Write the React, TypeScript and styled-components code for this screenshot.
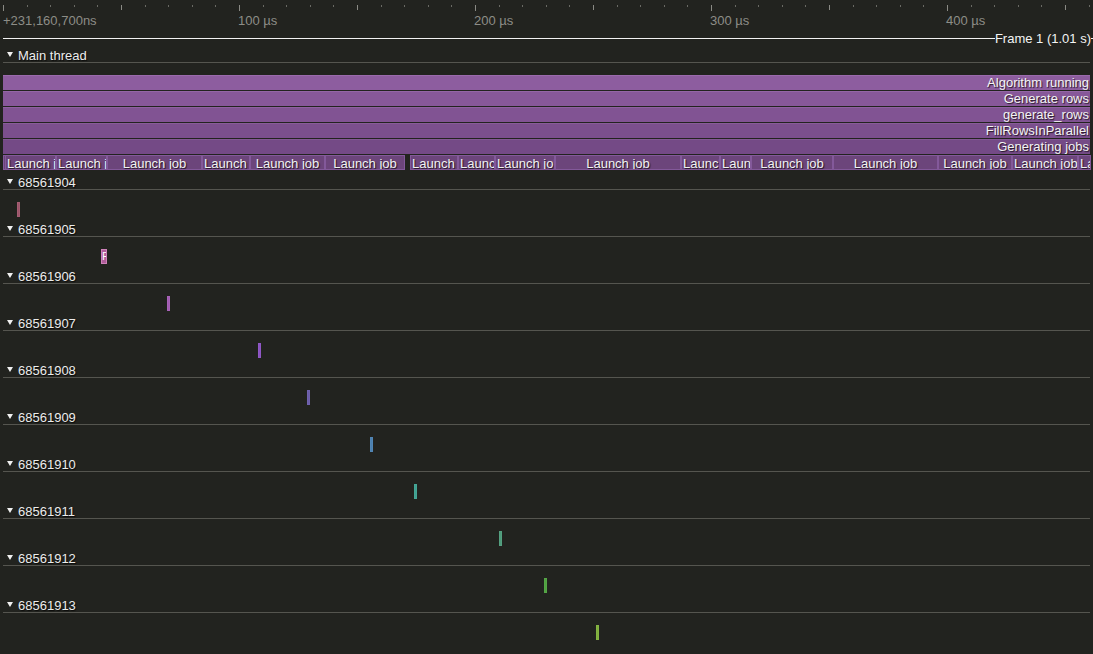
import React from 'react';
import styled, { createGlobalStyle } from 'styled-components';

const Global = createGlobalStyle`
  html, body { margin: 0; padding: 0; background: #22231f; }
  body {
    font-family: "Liberation Sans", Arial, sans-serif;
    font-size: 13px;
    color: #ececec;
    overflow: hidden;
  }
`;

const ORIGIN = 3;
const PX_PER_US = 2.36;

const Page = styled.div`
  width: 1093px;
  height: 654px;
  overflow: hidden;
  box-sizing: border-box;
  padding-left: ${ORIGIN}px;
  background: #22231f;
`;

const Ruler = styled.div`
  position: relative;
  width: 1090px;
  height: 31px;
`;

const TickSvg = styled.svg`
  position: absolute;
  left: 0;
  top: 0;
`;

const RulerLabel = styled.span`
  position: absolute;
  top: 14px;
  line-height: 14px;
  color: #8d8d87;
  white-space: nowrap;
`;

const FrameRow = styled.div`
  display: flex;
  align-items: flex-start;
  height: 14px;
  width: 1090px;
`;

const FrameLine = styled.div<{ $grow?: boolean }>`
  height: 1px;
  margin-top: 7px;
  background: #f2f2f2;
  flex: ${(p) => (p.$grow ? '1 1 auto' : '0 0 2px')};
`;

const FrameText = styled.span`
  margin-top: 1px;
  line-height: 14px;
  color: #f4f4f4;
  white-space: nowrap;
`;

const Header = styled.div<{ $pad: number }>`
  display: flex;
  align-items: flex-start;
  height: 14px;
  width: 1087px;
  padding-top: ${(p) => p.$pad}px;
  border-bottom: 1px solid #55554f;
`;

const Caret = styled.span`
  margin: 4px 5px 0 4px;
  width: 0;
  height: 0;
  border-left: 3px solid transparent;
  border-right: 3px solid transparent;
  border-top: 5px solid #f0f0f0;
`;

const HeaderText = styled.span`
  margin-top: 1px;
  line-height: 14px;
  color: #ececec;
  text-shadow: 1px 1px 1px rgba(0, 0, 0, 0.7);
  white-space: nowrap;
`;

const Stack = styled.div`
  display: flex;
  flex-direction: column;
  gap: 1px;
  width: 1087px;
  padding-top: 12px;
`;

const Bar = styled.div<{ $bg: string; $hi: string }>`
  height: 15px;
  line-height: 16px;
  background: ${(p) => p.$bg};
  box-shadow: inset 0 1px 0 ${(p) => p.$hi};
  text-align: right;
  padding-right: 1px;
  color: #f4f4f4;
  text-shadow: 1px 1px 1px rgba(0, 0, 0, 0.75);
  white-space: nowrap;
  overflow: hidden;
`;

const JobRow = styled.div`
  position: relative;
  height: 15px;
`;

const Job = styled.div`
  position: absolute;
  top: 0;
  height: 15px;
  box-sizing: border-box;
  background: #6c457b;
  border: 1px solid #83599a;
  line-height: 15px;
  padding: 0 1px;
  text-align: center;
  color: #f2f2f2;
  text-shadow: 1px 1px 1px rgba(0, 0, 0, 0.75);
  white-space: nowrap;
  overflow: hidden;
`;

const Track = styled.div`
  position: relative;
  width: 1087px;
  height: 27px;
`;

const Event = styled.div<{ $bg: string; $bd: string }>`
  position: absolute;
  top: 12px;
  height: 15px;
  box-sizing: border-box;
  background: ${(p) => p.$bg};
  border: 1px solid ${(p) => p.$bd};
  color: #ffffff;
  font-size: 11px;
  line-height: 13px;
  text-align: center;
  overflow: hidden;
  white-space: nowrap;
`;

const mainBars = [
  { label: 'Algorithm running', bg: '#8d5d9f', hi: '#9b6bad' },
  { label: 'Generate rows', bg: '#875899', hi: '#9466a6' },
  { label: 'generate_rows', bg: '#815393', hi: '#8e61a0' },
  { label: 'FillRowsInParallel', bg: '#7b4f8d', hi: '#885c99' },
  { label: 'Generating jobs', bg: '#744a86', hi: '#815793' },
];

const jobs: [number, number, string][] = [
  [3, 6, 'Launch job'],
  [5, 56, 'Launch job'],
  [56, 107, 'Launch job'],
  [107, 202, 'Launch job'],
  [202, 250, 'Launch job'],
  [250, 325, 'Launch job'],
  [325, 405, 'Launch job'],
  [410, 458, 'Launch job'],
  [458, 495, 'Launch job'],
  [495, 555, 'Launch job'],
  [555, 681, 'Launch job'],
  [681, 720, 'Launch job'],
  [720, 751, 'Launch job'],
  [751, 833, 'Launch job'],
  [833, 938, 'Launch job'],
  [938, 1012, 'Launch job'],
  [1012, 1078, 'Launch job'],
  [1078, 1091, 'Launch job'],
];

const threads = [
  { id: '68561904', x: 17, w: 3, bg: '#9a5468', bd: '#a45d72', label: '' },
  { id: '68561905', x: 101, w: 6, bg: '#b05d9a', bd: '#cf82b9', label: 'F' },
  { id: '68561906', x: 167, w: 3, bg: '#a05cb0', bd: '#a862b8', label: '' },
  { id: '68561907', x: 258, w: 3, bg: '#8a52c0', bd: '#9058c6', label: '' },
  { id: '68561908', x: 307, w: 3, bg: '#6a5ca8', bd: '#7062ae', label: '' },
  { id: '68561909', x: 370, w: 3, bg: '#4b7fae', bd: '#5185b4', label: '' },
  { id: '68561910', x: 414, w: 3, bg: '#3fa090', bd: '#45a696', label: '' },
  { id: '68561911', x: 499, w: 3, bg: '#4e9a7a', bd: '#54a080', label: '' },
  { id: '68561912', x: 544, w: 3, bg: '#4fa040', bd: '#55a646', label: '' },
  { id: '68561913', x: 596, w: 3, bg: '#7fae3c', bd: '#85b442', label: '' },
];

const rulerLabels = [
  { x: 3, text: '+231,160,700ns' },
  { x: 238, text: '100 µs' },
  { x: 474, text: '200 µs' },
  { x: 710, text: '300 µs' },
  { x: 946, text: '400 µs' },
];

function Ticks() {
  const ticks: React.ReactNode[] = [];
  for (let i = 0; ; i++) {
    const x = Math.round(i * PX_PER_US * 10) + 0.5;
    if (x > 1090) break;
    const major = i % 10 === 0;
    const mid = i % 5 === 0;
    const y2 = major ? 11 : mid ? 10 : 7;
    ticks.push(
      <line
        key={i}
        x1={x}
        x2={x}
        y1={5}
        y2={y2}
        stroke={major || mid ? '#8a8a84' : '#6a6a64'}
        strokeWidth={1}
      />
    );
  }
  return (
    <TickSvg width={1090} height={12} viewBox="0 0 1090 12">
      {ticks}
    </TickSvg>
  );
}

export default function App() {
  return (
    <>
      <Global />
      <Page>
        <Ruler>
          <Ticks />
          {rulerLabels.map((l) => (
            <RulerLabel key={l.text} style={{ left: l.x - ORIGIN }}>
              {l.text}
            </RulerLabel>
          ))}
        </Ruler>
        <FrameRow>
          <FrameLine $grow />
          <FrameText>Frame 1 (1.01 s)</FrameText>
          <FrameLine />
        </FrameRow>
        <Header $pad={3}>
          <Caret />
          <HeaderText>Main thread</HeaderText>
        </Header>
        <Stack>
          {mainBars.map((b) => (
            <Bar key={b.label} $bg={b.bg} $hi={b.hi}>
              {b.label}
            </Bar>
          ))}
          <JobRow>
            {jobs.map(([a, b, t], i) => (
              <Job key={i} style={{ left: a - ORIGIN, width: b - a }}>
                {t}
              </Job>
            ))}
          </JobRow>
        </Stack>
        {threads.map((t) => (
          <React.Fragment key={t.id}>
            <Header $pad={5}>
              <Caret />
              <HeaderText>{t.id}</HeaderText>
            </Header>
            <Track>
              <Event $bg={t.bg} $bd={t.bd} style={{ left: t.x - ORIGIN, width: t.w }}>
                {t.label}
              </Event>
            </Track>
          </React.Fragment>
        ))}
      </Page>
    </>
  );
}
